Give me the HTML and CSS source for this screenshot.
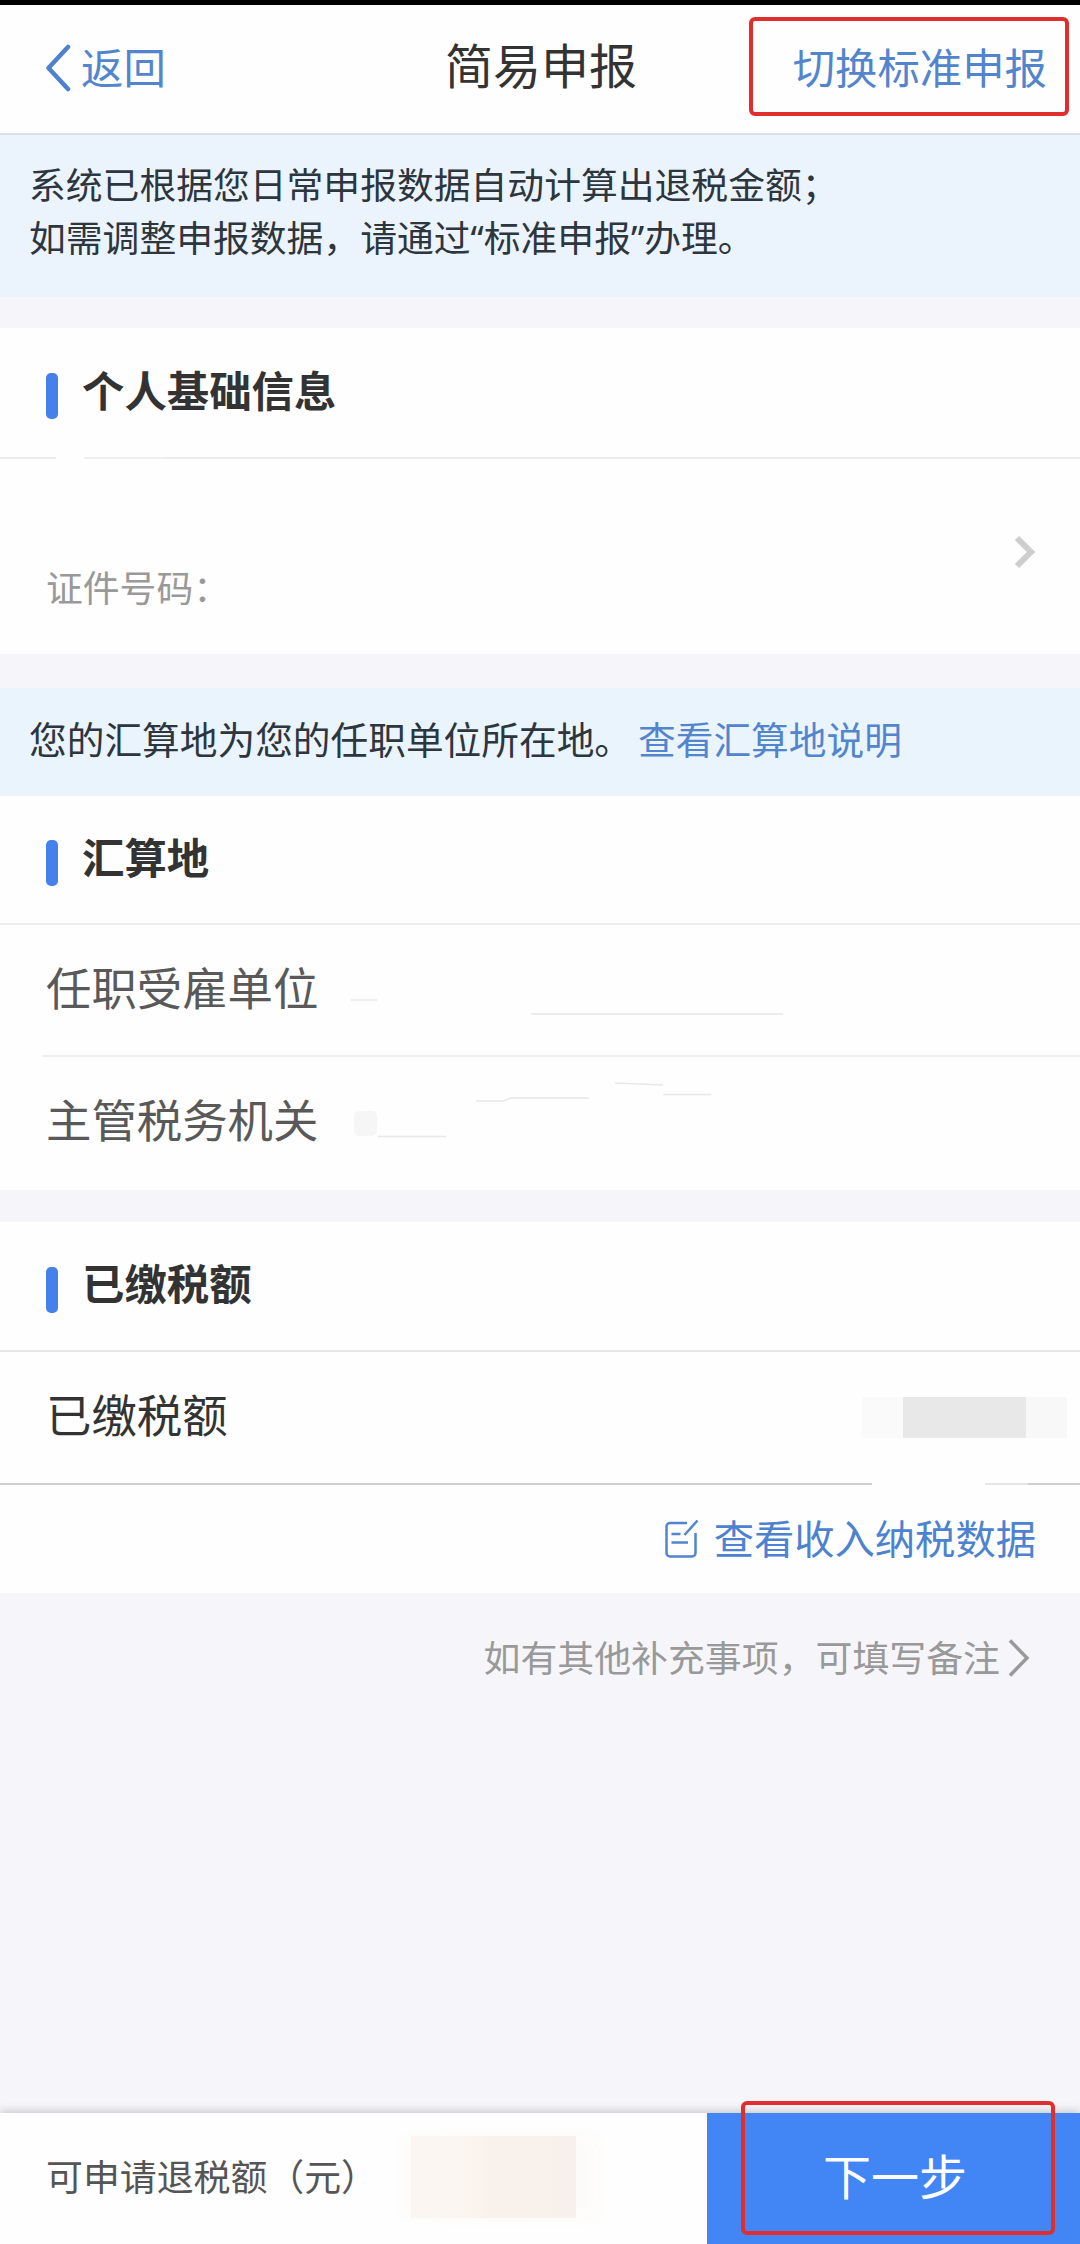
FILE: index.html
```html
<!DOCTYPE html>
<html lang="zh-CN">
<head>
<meta charset="utf-8">
<title>简易申报</title>
<link rel="stylesheet" href="styles.css">
</head>
<body>
<div class="app">
  <header class="navbar">
    <a class="back">
      <svg class="back-icon" width="26" height="48" viewBox="0 0 26 48"><path d="M23 3 3.5 24 23 45"/></svg>
      <span>返回</span>
    </a>
    <h1 class="navbar-title">简易申报</h1>
    <a class="switch">切换标准申报</a>
  </header>

  <p class="notice">系统已根据您日常申报数据自动计算出退税金额；<br>如需调整申报数据，请通过“标准申报”办理。</p>

  <section class="card card-person">
    <h2 class="card-title"><i class="bar"></i><span>个人基础信息</span></h2>
    <div class="rule rule-person"></div>
    <div class="person">
      <span class="person-id">证件号码：</span>
      <svg class="person-arrow" width="22" height="34" viewBox="0 0 22 34"><path d="M3 3 17 17 3 31"/></svg>
    </div>
  </section>

  <div class="tip">
    <span>您的汇算地为您的任职单位所在地。</span>
    <a class="tip-link">查看汇算地说明</a>
  </div>

  <section class="card card-place">
    <h2 class="card-title"><i class="bar"></i><span>汇算地</span></h2>
    <div class="rule"></div>
    <div class="row row-muted">
      <span class="row-label">任职受雇单位</span>
      <svg class="masked" width="440" height="130" viewBox="350 925 440 130">
        <path d="M352 1000H378M532 1014H784"/>
      </svg>
    </div>
    <div class="rule rule-inset"></div>
    <div class="row row-muted">
      <span class="row-label">主管税务机关</span>
      <svg class="masked" width="440" height="130" viewBox="350 1057 440 130">
        <rect x="355" y="1111" width="23" height="25" rx="5"/>
        <path d="M379 1136.5H447M477 1101H504L512 1098H590M616 1083 664 1085M664 1094.5H712"/>
      </svg>
    </div>
  </section>

  <section class="card card-tax">
    <h2 class="card-title"><i class="bar"></i><span>已缴税额</span></h2>
    <div class="rule rule-strong"></div>
    <div class="row row-tax">
      <span class="row-label">已缴税额</span>
      <span class="amount-mask"></span>
    </div>
    <div class="rule rule-tax"></div>
    <a class="income">
      <svg class="income-icon" width="34" height="40" viewBox="0 0 34 40">
        <path d="M22 4H5a3.500 3.500 0 0 0-3.500 3.500V34A3.500 3.500 0 0 0 5 37.500H27A3.500 3.500 0 0 0 30.500 34V14M32.500 1.500 19.500 16M6.500 15H15.500M6.500 23.500H23"/>
      </svg>
      <span>查看收入纳税数据</span>
    </a>
  </section>

  <a class="remark">
    <span>如有其他补充事项，可填写备注</span>
    <svg class="remark-arrow" width="24" height="40" viewBox="0 0 24 40"><path d="M3 2.500 20 20 3 37.500"/></svg>
  </a>

  <footer class="footer">
    <div class="refund">
      <span>可申请退税额（元）</span>
      <span class="refund-mask"></span>
    </div>
    <button class="next">下一步</button>
  </footer>

  <div class="mark mark-switch"></div>
  <div class="mark mark-next"></div>
</div>
</body>
</html>
```
FILE: styles.css
```css
* { box-sizing: border-box; }

body {
  margin: 0;
  background: #f6f6fa;
  color: #333;
  font-family: "Noto Sans", "Noto Sans CJK SC", sans-serif;
}

.app {
  position: relative;
  display: flex;
  flex-direction: column;
  width: 1080px;
  height: 2244px;
  overflow: hidden;
}

svg { flex: none; fill: none; }
h1, h2, p { margin: 0; font-weight: 400; }

/* Top bar */
.navbar {
  display: grid;
  grid-template-columns: 1fr auto 1fr;
  align-items: center;
  height: 135px;
  padding: 0 33px 7px 45px;
  border-top: 5px solid #000;
  border-bottom: 2px solid #dcdfe3;
  background: #fefefe;
}
.back { display: flex; align-items: center; gap: 10px; color: #5285cd; font-size: 42.400px; line-height: 60px; padding-top: 4px; }
.back-icon { stroke: #5081cc; stroke-width: 4.5; stroke-linecap: round; stroke-linejoin: round; }
.navbar-title { padding-right: 10px; font-size: 48px; line-height: 64px; }
.switch { justify-self: end; color: #5285cd; font-size: 42.400px; line-height: 60px; padding-top: 4px; }

.notice {
  height: 162px;
  padding: 24px 29px 0;
  background: #ebf4fd;
  color: #2d353d;
  font-size: 36.800px;
  line-height: 53px;
  white-space: nowrap;
}

/* Cards */
.card { background: #fefefe; }
.card-person { height: 326px; margin-top: 31px; }
.card-place { height: 394px; }
.card-tax { height: 371px; margin-top: 32px; }

.card-title {
  display: flex;
  align-items: center;
  gap: 24px;
  height: 129px;
  padding-left: 46px;
  font-size: 42.400px;
  font-weight: 700;
  line-height: 60px;
}
.card-place .card-title { height: 127px; }
.card-tax .card-title { height: 128px; }
.card-title span { margin-bottom: 4px; }
.bar { width: 12px; height: 46px; margin-top: 7px; border-radius: 5px; background: #4680ea; }

.rule { height: 2px; background: #ededed; }
.rule-inset { margin-left: 43px; }
.rule-strong { background: #e6e6e6; }
.rule-person { background: linear-gradient(90deg, #ebebeb 56px, transparent 56px 84px, #f1efed 84px 165px, #ebebeb 165px); }
.rule-tax { background: linear-gradient(90deg, #cfcfcf 872px, transparent 872px 985px, #e6e6e6 985px 1028px, #cfcfcf 1028px); }

.person { display: flex; justify-content: space-between; height: 195px; padding: 0 44px 0 46px; }
.person-id { padding-top: 103px; color: #999; font-size: 36.800px; line-height: 52px; }
.person-arrow { margin-top: 76px; stroke: #cecece; stroke-width: 6; }

.tip {
  display: flex;
  align-items: center;
  gap: 6px;
  height: 108px;
  margin-top: 34px;
  padding: 0 29px 4px;
  background: #eaf4fd;
  color: #2d353d;
  font-size: 37.700px;
  line-height: 54px;
  white-space: nowrap;
}
.tip-link { color: #5285cd; }

.row { display: flex; align-items: center; height: 130px; padding-left: 46px; font-size: 45.400px; line-height: 64px; }
.row-label { margin-bottom: 5px; }
.row-muted { color: #595959; }
.masked { margin-left: 31px; stroke: #e8e8e8; stroke-width: 1.500; }
.masked rect { fill: #f6f6f6; stroke: none; }

.row-tax { justify-content: space-between; height: 131px; padding-right: 13px; }
.row-tax .row-label { margin-bottom: 6px; }
.amount-mask {
  width: 205px;
  height: 41px;
  background: linear-gradient(90deg, #fafafa 41px, #e8e8e8 41px 164px, #f8f8f8 164px);
}

.income { display: flex; justify-content: flex-end; align-items: center; gap: 15px; height: 108px; padding-right: 44px; color: #4c82cf; font-size: 40.300px; line-height: 58px; }
.income-icon { stroke: #5285cd; stroke-width: 2.500; }

.remark { display: flex; justify-content: flex-end; align-items: center; gap: 7px; height: 60px; margin-top: 35px; padding-right: 49px; color: #999; font-size: 36.900px; line-height: 54px; }
.remark-arrow { stroke: #999; stroke-width: 3.500; }

/* Bottom bar */
.footer { display: flex; height: 131px; margin-top: auto; background: #fefefe; box-shadow: 0 -2px 8px rgba(60, 65, 75, .25); }
.refund { display: flex; align-items: center; width: 707px; padding: 0 0 3px 46px; color: #555; font-size: 36.900px; line-height: 54px; white-space: nowrap; }
.refund-mask { width: 165px; height: 82px; margin-left: 33px; background: linear-gradient(90deg, #fcf6f2 40px, #f9f2ec 80px, #f8f0ea); box-shadow: 22px 0 20px #fdfbf9, -12px 0 12px #fdfcfb; }
.next { flex: 1; padding: 0 0 4px 3px; border: 0; background: #4285f4; color: #fff; font: inherit; font-size: 48px; line-height: 64px; }

/* Highlight frames lying over the page */
.mark { position: absolute; border: 4px solid #e02e2e; border-radius: 6px; }
.mark-switch { left: 749px; top: 17px; width: 320px; height: 99px; }
.mark-next { left: 741px; top: 2101px; width: 314px; height: 134px; }
```
